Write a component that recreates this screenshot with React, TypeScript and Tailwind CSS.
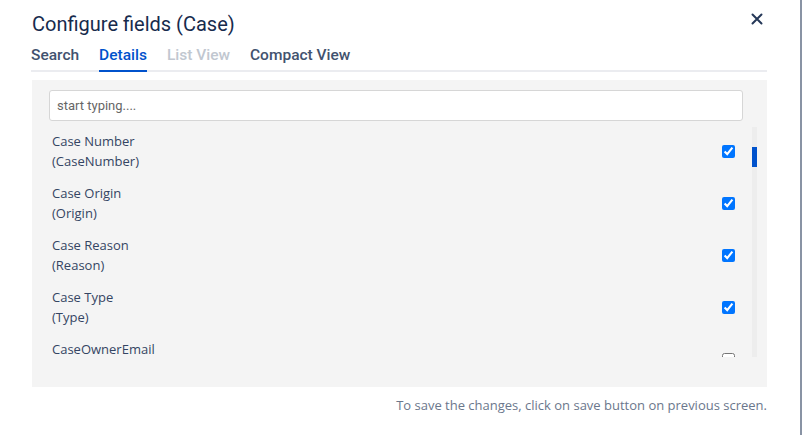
import React from "react";

const fields: { label: string; api?: string; checked: boolean }[] = [
  { label: "Case Number", api: "CaseNumber", checked: true },
  { label: "Case Origin", api: "Origin", checked: true },
  { label: "Case Reason", api: "Reason", checked: true },
  { label: "Case Type", api: "Type", checked: true },
  { label: "CaseOwnerEmail", checked: false },
];

const tabs = ["Search", "Details", "List View", "Compact View"];

export default function App() {
  return (
    <div className="flex h-[435px] w-[802px] bg-white font-['Roboto',sans-serif]">
      <div className="flex flex-1 flex-col pl-[32px] pr-[33px]">
        {/* header */}
        <div className="flex items-start justify-between pt-[10px]">
          <h1 className="text-[20px] leading-[28px] text-[#172b4d]">Configure fields (Case)</h1>
          <button className="mr-[4px] mt-[3px] text-[#253858]">
            <svg width="12" height="12" viewBox="0 0 12 12" fill="none">
              <path d="M1.5 1.5 10.5 10.5M10.5 1.5 1.5 10.5" stroke="currentColor" strokeWidth="2" strokeLinecap="round" />
            </svg>
          </button>
        </div>

        {/* tabs */}
        <div className="-ml-px mt-[7px] flex gap-5 border-b-2 border-[#ebecf0]">
          {tabs.map((t) => (
            <div
              key={t}
              className={
                t === "Details"
                  ? "-mb-[2px] border-b-2 border-[#0052cc] pb-[5px] text-[15.5px] font-medium leading-[20px] text-[#0052cc]"
                  : t === "List View"
                  ? "pb-[5px] text-[15.5px] font-medium leading-[20px] text-[#c1c7d0]"
                  : "pb-[5px] text-[15.5px] font-medium leading-[20px] text-[#42526e]"
              }
            >
              {t}
            </div>
          ))}
        </div>

        {/* panel */}
        <div className="mt-[8px] flex h-[307px] flex-col bg-[#f4f4f4] pl-[17px] pt-[10px]">
          <input
            placeholder="start typing...."
            className="mr-[24px] h-[31px] rounded-[3px] border border-[#d6d6d6] bg-white px-[7px] font-['Roboto',sans-serif] text-[13px] text-[#172b4d] outline-none placeholder:text-[#666]"
          />
          <div className="mt-[6px] flex h-[230px]">
            <div className="flex-1 overflow-hidden pl-[3px] pt-[4px] font-['Open_Sans',sans-serif]">
              {fields.map((f) => (
                <div key={f.label} className="mb-[12px] flex items-start pr-[17px]">
                  <div className="flex-1 text-[13px] leading-[20px] text-[#344563]">
                    <div>{f.label}</div>
                    {f.api && <div>({f.api})</div>}
                  </div>
                  <input
                    type="checkbox"
                    defaultChecked={f.checked}
                    className="m-0 mt-[14px] h-[13px] w-[13px] accent-[#0075ff]"
                  />
                </div>
              ))}
            </div>
            <div className="mr-[10px] w-[5px] bg-[#ededed]">
              <div className="mt-[20px] h-[20px] w-full bg-[#0052cc]" />
            </div>
          </div>
        </div>

        {/* footer */}
        <div className="mt-[10px] text-right font-['Open_Sans',sans-serif] text-[13px] leading-[16px] text-[#6b778c]">
          To save the changes, click on save button on previous screen.
        </div>
      </div>
      <div className="w-[2px] bg-[#8993a4]" />
    </div>
  );
}
